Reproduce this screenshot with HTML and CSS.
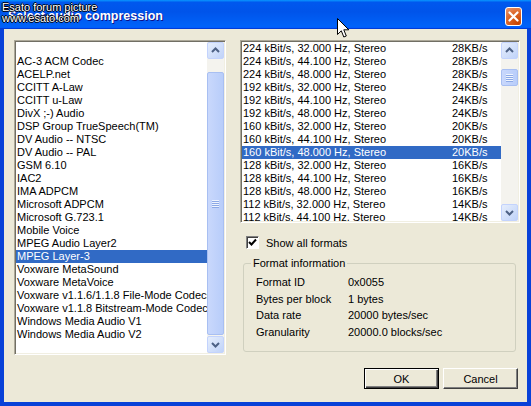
FILE: index.html
```html
<!DOCTYPE html>
<html lang="en">
<head>
    <meta charset="UTF-8">
    <title>Select audio compression</title>
    <link rel="stylesheet" href="styles.css">
</head>
<body>
    <div class="window">
        <div class="titlebar">
            <span class="title">Select audio compression</span>
            <div class="close">
                <svg width="11" height="11" viewBox="0 0 11 11"><path d="M1.5 1.5 L9.5 9.5 M9.5 1.5 L1.5 9.5" stroke="#fff" stroke-width="2.2" stroke-linecap="round"/></svg>
            </div>
        </div>
        <div class="watermark">Esato forum picture<br>www.esato.com</div>

        <div class="frame">
            <div class="listbox codecs">
                <ul class="items">
                    <li>&nbsp;</li>
                    <li>AC-3 ACM Codec</li>
                    <li>ACELP.net</li>
                    <li>CCITT A-Law</li>
                    <li>CCITT u-Law</li>
                    <li>DivX ;-) Audio</li>
                    <li>DSP Group TrueSpeech(TM)</li>
                    <li>DV Audio -- NTSC</li>
                    <li>DV Audio -- PAL</li>
                    <li>GSM 6.10</li>
                    <li>IAC2</li>
                    <li>IMA ADPCM</li>
                    <li>Microsoft ADPCM</li>
                    <li>Microsoft G.723.1</li>
                    <li>Mobile Voice</li>
                    <li>MPEG Audio Layer2</li>
                    <li class="selected">MPEG Layer-3</li>
                    <li>Voxware MetaSound</li>
                    <li>Voxware MetaVoice</li>
                    <li>Voxware v1.1.6/1.1.8 File-Mode Codecs</li>
                    <li>Voxware v1.1.8 Bitstream-Mode Codecs</li>
                    <li>Windows Media Audio V1</li>
                    <li>Windows Media Audio V2</li>
                </ul>
                <div class="scrollbar">
                    <div class="sb-btn"><svg width="15" height="15" viewBox="0 0 15 15"><polyline points="4,9 7.5,5.5 11,9" fill="none" stroke="#4d6185" stroke-width="2"/></svg></div>
                    <div class="sb-track">
                        <div class="sb-thumb long"><span class="grip"></span></div>
                    </div>
                    <div class="sb-btn"><svg width="15" height="15" viewBox="0 0 15 15"><polyline points="4,6 7.5,9.5 11,6" fill="none" stroke="#4d6185" stroke-width="2"/></svg></div>
                </div>
            </div>

            <div class="side">
                <div class="listbox formats">
                    <ul class="items">
                        <li><span>224 kBit/s, 32.000 Hz, Stereo</span><span>28KB/s</span></li>
                        <li><span>224 kBit/s, 44.100 Hz, Stereo</span><span>28KB/s</span></li>
                        <li><span>224 kBit/s, 48.000 Hz, Stereo</span><span>28KB/s</span></li>
                        <li><span>192 kBit/s, 32.000 Hz, Stereo</span><span>24KB/s</span></li>
                        <li><span>192 kBit/s, 44.100 Hz, Stereo</span><span>24KB/s</span></li>
                        <li><span>192 kBit/s, 48.000 Hz, Stereo</span><span>24KB/s</span></li>
                        <li><span>160 kBit/s, 32.000 Hz, Stereo</span><span>20KB/s</span></li>
                        <li><span>160 kBit/s, 44.100 Hz, Stereo</span><span>20KB/s</span></li>
                        <li class="selected"><span>160 kBit/s, 48.000 Hz, Stereo</span><span>20KB/s</span></li>
                        <li><span>128 kBit/s, 32.000 Hz, Stereo</span><span>16KB/s</span></li>
                        <li><span>128 kBit/s, 44.100 Hz, Stereo</span><span>16KB/s</span></li>
                        <li><span>128 kBit/s, 48.000 Hz, Stereo</span><span>16KB/s</span></li>
                        <li><span>112 kBit/s, 32.000 Hz, Stereo</span><span>14KB/s</span></li>
                        <li><span>112 kBit/s, 44.100 Hz, Stereo</span><span>14KB/s</span></li>
                        <li><span>112 kBit/s, 48.000 Hz, Stereo</span><span>14KB/s</span></li>
                    </ul>
                    <div class="scrollbar">
                        <div class="sb-btn"><svg width="15" height="15" viewBox="0 0 15 15"><polyline points="4,9 7.5,5.5 11,9" fill="none" stroke="#4d6185" stroke-width="2"/></svg></div>
                        <div class="sb-track">
                            <div class="sb-thumb short"><span class="grip"></span></div>
                        </div>
                        <div class="sb-btn"><svg width="15" height="15" viewBox="0 0 15 15"><polyline points="4,6 7.5,9.5 11,6" fill="none" stroke="#4d6185" stroke-width="2"/></svg></div>
                    </div>
                </div>

                <label class="check">
                    <span class="box"><svg width="9" height="9" viewBox="0 0 9 9"><path d="M1 4 L3.5 6.5 L8 1.5" fill="none" stroke="#000" stroke-width="2"/></svg></span>
                    Show all formats
                </label>

                <fieldset class="info">
                    <legend>Format information</legend>
                    <div class="info-grid">
                        <span>Format ID</span><span>0x0055</span>
                        <span>Bytes per block</span><span>1 bytes</span>
                        <span>Data rate</span><span>20000 bytes/sec</span>
                        <span>Granularity</span><span>20000.0 blocks/sec</span>
                    </div>
                </fieldset>

                <div class="buttons">
                    <button class="btn default">OK</button>
                    <button class="btn">Cancel</button>
                </div>
            </div>
        </div>

        <svg class="cursor" width="13" height="21" viewBox="0 0 13 21">
            <path d="M0.5 0.5 L0.5 16.5 L4.3 12.8 L6.8 19 L9.3 18 L6.8 11.8 L11.8 11.8 Z" fill="#fff" stroke="#000" stroke-width="1" stroke-linejoin="miter"/>
        </svg>
    </div>
</body>
</html>
```

FILE: styles.css
```css
body {
    margin: 0;
    font-family: 'Liberation Sans', Arial, sans-serif;
    font-size: 11px;
    color: #000;
}

.window {
    position: relative;
    width: 531px;
    height: 406px;
    display: flex;
    flex-direction: column;
    overflow: hidden;
}

.titlebar {
    height: 29px;
    display: flex;
    align-items: flex-start;
    background: linear-gradient(180deg, #0997ff, #0058ee 8%, #0054ea 40%, #0062f8 88%, #0062f8 93%, #005bff 95%, #003dd7 96%, #003dd7);
    padding-left: 8px;
}

.title {
    margin-top: 10px;
    line-height: 13px;
    font-size: 12.5px;
    font-weight: bold;
    color: #fff;
    text-shadow: 1px 1px #0f1089;
}

.close {
    margin: 7px 9px 0 auto;
    width: 17px;
    height: 19px;
    box-sizing: border-box;
    border: 1px solid #fff;
    border-radius: 3px;
    background: radial-gradient(circle at 80% 90%, #c84400 0%, #dc6527 55%, #ea9a76 100%);
    display: flex;
    justify-content: center;
    align-items: center;
}

.watermark {
    position: absolute;
    left: 2px;
    top: 2px;
    line-height: 11px;
    font-size: 11px;
    color: #fff;
    text-shadow: -1px 0 #000, 1px 0 #000, 0 -1px #000, 0 1px #000;
}

.frame {
    flex: 1;
    display: flex;
    gap: 14px;
    padding: 11px 7px 0 10px;
    background: #ece9d8;
    border: 4px solid #0841d8;
    border-top: none;
}

/* list boxes */

.listbox {
    display: flex;
    background: #fff;
    border: 1px solid;
    border-color: #aca899 #fff #fff #aca899;
    box-shadow: inset 1px 1px #716f64, inset -1px -1px #f1efe2;
    padding: 1px;
    overflow: hidden;
}

.codecs {
    width: 210px;
    height: 311px;
}

.formats {
    width: 276px;
    height: 179px;
}

.items {
    flex: 1;
    list-style: none;
    margin: 0;
    padding: 0;
    overflow: hidden;
}

.items li {
    height: 13px;
    line-height: 13px;
    padding-left: 1px;
    white-space: nowrap;
    overflow: hidden;
}

.formats .items li {
    display: grid;
    grid-template-columns: 209px auto;
}

.items li.selected {
    background: #316ac5;
    color: #fff;
}

.scrollbar {
    width: 17px;
    display: flex;
    flex-direction: column;
    background: #f4f3ee;
}

.sb-btn {
    height: 17px;
    box-sizing: border-box;
    border: 1px solid #c3d3fd;
    border-radius: 2px;
    background: linear-gradient(135deg, #e6eefc, #c0d3f9);
    display: flex;
    justify-content: center;
    align-items: center;
}

.sb-track {
    flex: 1;
    display: flex;
    flex-direction: column;
}

.sb-thumb {
    box-sizing: border-box;
    border: 1px solid #a8bff2;
    border-radius: 2px;
    background: linear-gradient(90deg, #c9d8fc, #b8cdfa);
    display: flex;
    justify-content: center;
    align-items: center;
}

.sb-thumb.long {
    margin-top: 13px;
    flex: 1;
    margin-bottom: 1px;
}

.sb-thumb.short {
    margin-top: 10px;
    height: 17px;
}

.grip {
    width: 7px;
    height: 8px;
    background: repeating-linear-gradient(#eef4fe 0 1px, #8ca9e6 1px 2px);
}

/* right column */

.side {
    width: 280px;
    display: flex;
    flex-direction: column;
}

.check {
    margin-top: 13px;
    display: flex;
    align-items: center;
    gap: 7px;
    height: 13px;
    padding-left: 6px;
}

.box {
    width: 13px;
    height: 13px;
    box-sizing: border-box;
    background: #fff;
    border: 1px solid;
    border-color: #808080 #fff #fff #808080;
    box-shadow: inset 1px 1px #404040;
    display: flex;
    justify-content: center;
    align-items: center;
}

.info {
    margin: 8px 4px 0 3px;
    padding: 4px 0 11px 12px;
    border: 1px solid #d0d0bf;
    border-radius: 3px;
    min-inline-size: 0;
}

.info legend {
    margin-left: -5px;
    padding: 0 2px;
    line-height: 13px;
}

.info-grid {
    display: grid;
    grid-template-columns: 92px 1fr;
    grid-auto-rows: 16.5px;
    align-items: center;
}

.buttons {
    margin-top: 16px;
    display: flex;
    justify-content: flex-end;
    gap: 4px;
    padding-right: 2px;
}

.btn {
    width: 75px;
    height: 21px;
    font-family: inherit;
    font-size: 11px;
    color: #000;
    background: #ece9d8;
    border: 1px solid;
    border-color: #fff #404040 #404040 #fff;
    box-shadow: inset -1px -1px #808080;
    padding: 0;
}

.btn.default {
    border: 1px solid #000;
    box-shadow: inset 1px 1px #fff, inset -1px -1px #404040, inset -2px -2px #808080;
}

.cursor {
    position: absolute;
    left: 337px;
    top: 18px;
}
```
